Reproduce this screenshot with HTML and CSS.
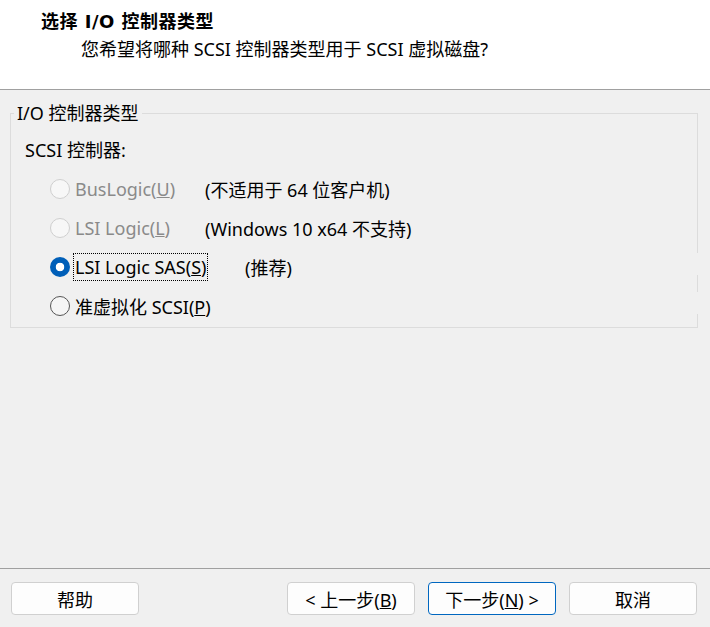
FILE: index.html
```html
<!DOCTYPE html>
<html lang="zh-CN">
<head>
  <meta charset="UTF-8">
  <title>新建虚拟机向导</title>
  <link rel="stylesheet" href="styles.css">
</head>
<body>

<div class="wizard">
  <div class="header">
    <h2>选择 I/O 控制器类型</h2>
    <p class="sub">您希望将哪种 SCSI 控制器类型用于 SCSI 虚拟磁盘?</p>
  </div>

  <div class="content">
    <fieldset class="group">
      <legend>I/O 控制器类型</legend>
      <div class="caption">SCSI 控制器:</div>

      <div class="opt disabled">
        <span class="radio"></span>
        <span class="name">BusLogic(<u>U</u>)</span>
        <span class="note">(不适用于 64 位客户机)</span>
      </div>
      <div class="opt disabled">
        <span class="radio"></span>
        <span class="name">LSI Logic(<u>L</u>)</span>
        <span class="note">(Windows 10 x64 不支持)</span>
      </div>
      <div class="opt sas">
        <span class="radio checked"></span>
        <span class="name"><span class="focus">LSI Logic SAS(<u>S</u>)</span></span>
        <span class="note">(推荐)</span>
      </div>
      <div class="opt">
        <span class="radio"></span>
        <span class="name">准虚拟化 SCSI(<u>P</u>)</span>
      </div>
    </fieldset>
  </div>

  <div class="footer">
    <button class="btn">帮助</button>
    <div class="spacer"></div>
    <button class="btn">&lt; 上一步(<u>B</u>)</button>
    <button class="btn primary">下一步(<u>N</u>) &gt;</button>
    <button class="btn">取消</button>
  </div>
</div>

</body>
</html>
```

FILE: styles.css
```css
body {
  margin: 0;
  font-family: "Noto Sans", "Noto Sans CJK SC", sans-serif;
  font-size: 18px;
  color: #000;
  background: #f0f0f0;
}
.wizard {
  height: 627px;
  display: flex;
  flex-direction: column;
}
.header {
  flex: none;
  height: 90px;
  box-sizing: border-box;
  background: #fff;
  border-bottom: 1px solid #a0a0a0;
  padding: 9px 0 0 41px;
}
.header h2 {
  margin: 0;
  font-family: "DejaVu Sans", "Noto Sans CJK SC", sans-serif;
  font-size: 18px;
  font-weight: bold;
  letter-spacing: 0.5px;
  line-height: 26px;
}
.sub {
  margin: 0 0 0 40px;
  line-height: 28px;
}
.content {
  flex: 1;
  position: relative;
  padding: 11px 12px 0 10px;
}
/* repaint gaps on the group box's right edge */
.content::after {
  content: "";
  position: absolute;
  left: 697px;
  top: 163px;
  width: 1px;
  height: 61px;
  background: linear-gradient(#f0f0f0 0 22px, transparent 22px 39px, #f0f0f0 39px);
}
.group {
  margin: 0;
  padding: 4px 0 0 0;
  border: 1px solid #dcdcdc;
  height: 227px;
  box-sizing: border-box;
}
.group legend {
  margin-left: 3px;
  padding: 0 3px;
  line-height: 24px;
}
.caption {
  margin: 8px 0 0 14px;
  line-height: 26px;
  padding-bottom: 6px;
}
.opt {
  display: flex;
  align-items: center;
  height: 39px;
  padding-left: 39px;
}
.radio {
  width: 18px;
  height: 18px;
  border: 1px solid #555;
  border-radius: 50%;
  background: #f5f5f5;
  flex: none;
}
.disabled .radio {
  border-color: #cfcfcf;
  background: #f7f7f7;
}
.radio.checked {
  width: 20px;
  height: 20px;
  border: none;
  background: radial-gradient(circle, #fff 0 4px, #005fb8 4.6px);
}
.name {
  width: 130px;
  margin-left: 5px;
  white-space: nowrap;
}
.disabled .name {
  color: #8a8a8a;
}
.sas .name {
  width: 170px;
}
.focus {
  outline: 1px dotted #000;
  outline-offset: 1px;
}
.note {
  white-space: nowrap;
}
.footer {
  flex: none;
  height: 59px;
  box-sizing: border-box;
  border-top: 1px solid #a0a0a0;
  display: flex;
  align-items: flex-start;
  padding: 13px 13px 0 11px;
  gap: 13px;
}
.spacer {
  flex: 1;
}
.btn {
  width: 128px;
  height: 33px;
  font-family: inherit;
  font-size: 18px;
  color: #000;
  background: #fdfdfd;
  border: 1px solid #d0d0d0;
  border-radius: 4px;
  padding: 0;
}
.btn.primary {
  border-color: #0067c0;
}
```
